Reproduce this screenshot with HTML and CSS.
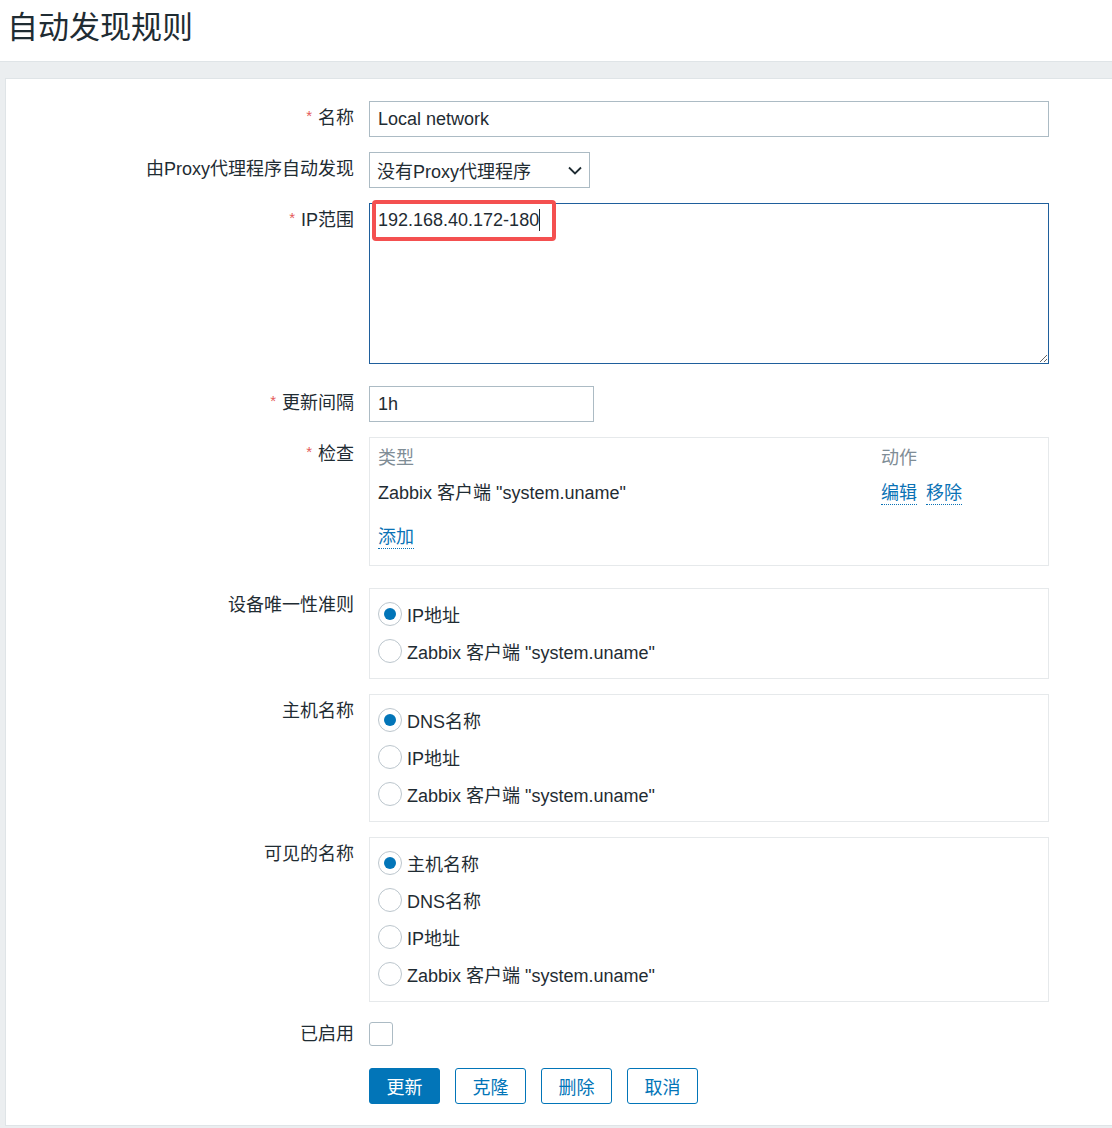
FILE: index.html
```html
<!DOCTYPE html>
<html lang="zh-CN">
<head>
    <meta charset="UTF-8">
    <meta name="viewport" content="width=device-width, initial-scale=1.0">
    <title>自动发现规则</title>
    <link rel="stylesheet" href="styles.css">
</head>
<body>

<header class="page-header">
    <h1>自动发现规则</h1>
</header>

<main class="page-content">
    <form class="form-card" id="drule-form">

        <div class="form-row">
            <label class="form-label required" for="name">名称</label>
            <div class="form-field">
                <input type="text" id="name" class="input input-wide" value="Local network">
            </div>
        </div>

        <div class="form-row">
            <label class="form-label">由Proxy代理程序自动发现</label>
            <div class="form-field">
                <div class="select">
                    <span>没有Proxy代理程序</span>
                    <svg width="14" height="9" viewBox="0 0 14 9"><path d="M1 1.5l6 6 6-6" fill="none" stroke="#1f2c33" stroke-width="1.8"/></svg>
                </div>
            </div>
        </div>

        <div class="form-row row-tall">
            <label class="form-label required" for="iprange">IP范围</label>
            <div class="form-field">
                <div class="textarea-wrap">
                    <textarea id="iprange" class="textarea">192.168.40.172-180</textarea>
                    <span class="caret"></span>
                    <span class="highlight"></span>
                </div>
            </div>
        </div>

        <div class="form-row">
            <label class="form-label required" for="delay">更新间隔</label>
            <div class="form-field">
                <input type="text" id="delay" class="input input-short" value="1h">
            </div>
        </div>

        <div class="form-row row-tall">
            <label class="form-label required">检查</label>
            <div class="form-field">
                <div class="box checks">
                    <div class="checks-head">类型</div>
                    <div class="checks-head">动作</div>
                    <div class="checks-cell">Zabbix 客户端 "system.uname"</div>
                    <div class="checks-cell">
                        <a class="link" href="#">编辑</a>
                        <a class="link" href="#">移除</a>
                    </div>
                    <div class="checks-add"><a class="link" href="#">添加</a></div>
                </div>
            </div>
        </div>

        <div class="form-row">
            <label class="form-label">设备唯一性准则</label>
            <div class="form-field">
                <div class="box radio-list">
                    <div class="radio-item"><span class="radio checked"></span>IP地址</div>
                    <div class="radio-item"><span class="radio"></span>Zabbix 客户端 "system.uname"</div>
                </div>
            </div>
        </div>

        <div class="form-row">
            <label class="form-label">主机名称</label>
            <div class="form-field">
                <div class="box radio-list">
                    <div class="radio-item"><span class="radio checked"></span>DNS名称</div>
                    <div class="radio-item"><span class="radio"></span>IP地址</div>
                    <div class="radio-item"><span class="radio"></span>Zabbix 客户端 "system.uname"</div>
                </div>
            </div>
        </div>

        <div class="form-row row-visible">
            <label class="form-label">可见的名称</label>
            <div class="form-field">
                <div class="box radio-list">
                    <div class="radio-item"><span class="radio checked"></span>主机名称</div>
                    <div class="radio-item"><span class="radio"></span>DNS名称</div>
                    <div class="radio-item"><span class="radio"></span>IP地址</div>
                    <div class="radio-item"><span class="radio"></span>Zabbix 客户端 "system.uname"</div>
                </div>
            </div>
        </div>

        <div class="form-row row-check">
            <label class="form-label">已启用</label>
            <div class="form-field">
                <span class="checkbox"></span>
            </div>
        </div>

        <div class="form-row row-buttons">
            <div></div>
            <div class="form-field buttons">
                <button type="button" class="btn btn-primary">更新</button>
                <button type="button" class="btn">克隆</button>
                <button type="button" class="btn">删除</button>
                <button type="button" class="btn">取消</button>
            </div>
        </div>

    </form>
</main>

</body>
</html>
```

FILE: styles.css
```css
html, body {
    margin: 0;
    padding: 0;
}
body {
    font-family: "Liberation Sans", Arial, "Noto Sans CJK SC", sans-serif;
    font-size: 18px;
    color: #1f2c33;
    background-color: #ebeef0;
    overflow: hidden;
}
.page-header {
    background: #fff;
    height: 62px;
    border-bottom: 1px solid #dfe4e7;
    box-sizing: border-box;
}
.page-header h1 {
    margin: 0;
    padding: 9px 0 0 7px;
    font-size: 31px;
    font-weight: normal;
    line-height: 38px;
}
.page-content {
    padding: 16px 0 0 5px;
}
.form-card {
    background: #fff;
    border: 1px solid #dfe4e7;
    border-right: none;
    padding: 22px 0 21px 0;
}
.form-row {
    display: grid;
    grid-template-columns: 348px 680px;
    column-gap: 15px;
    margin-bottom: 15px;
}
.form-row.row-tall {
    margin-bottom: 22px;
}
.form-row.row-visible {
    margin-bottom: 20px;
}
.form-row.row-check {
    margin-bottom: 22px;
}
.form-row.row-buttons {
    margin-bottom: 0;
}
.form-label {
    text-align: right;
    line-height: 35px;
    white-space: nowrap;
}
.row-check .form-label {
    line-height: 24px;
}
.form-label.required::before {
    content: "*";
    color: #e45959;
    font-size: 15px;
    margin-right: 6px;
    position: relative;
    top: -3px;
}
.input {
    display: block;
    height: 36px;
    box-sizing: border-box;
    border: 1px solid #acbbc4;
    padding: 0 8px;
    font: inherit;
    color: inherit;
    outline: none;
}
.input-wide {
    width: 680px;
}
.input-short {
    width: 225px;
}
.select {
    width: 221px;
    height: 36px;
    box-sizing: border-box;
    border: 1px solid #acbbc4;
    padding: 0 7px 0 7px;
    display: flex;
    align-items: center;
    justify-content: space-between;
}
.textarea-wrap {
    position: relative;
    width: 680px;
    height: 161px;
}
.textarea {
    display: block;
    width: 680px;
    height: 161px;
    box-sizing: border-box;
    border: 1px solid #1f5f9c;
    padding: 5px 8px;
    font: inherit;
    line-height: 22px;
    color: inherit;
    resize: vertical;
    outline: none;
}
/* text cursor after the last typed digit */
.caret {
    position: absolute;
    left: 170px;
    top: 6px;
    width: 1px;
    height: 22px;
    background: #1f2c33;
}
.highlight {
    position: absolute;
    left: 3px;
    top: -3px;
    width: 184px;
    height: 41px;
    box-sizing: border-box;
    border: 4px solid #f45050;
    border-radius: 4px;
}
.box {
    border: 1px solid #e6e9eb;
    width: 680px;
    box-sizing: border-box;
}
.checks {
    display: grid;
    grid-template-columns: 503px 1fr;
    padding: 3px 8px 10px 8px;
}
.checks-head {
    color: #7f8d96;
    line-height: 35px;
}
.checks-cell {
    line-height: 35px;
    white-space: nowrap;
}
.checks-cell .link + .link {
    margin-left: 4px;
}
.checks-add {
    grid-column: 1 / 3;
    margin-top: 9px;
    line-height: 35px;
}
.link {
    color: #0a72b5;
    text-decoration: none;
    border-bottom: 1px dotted #0a72b5;
    padding-bottom: 1px;
}
.radio-list {
    padding: 6px 8px 9px 8px;
}
.radio-item {
    display: flex;
    align-items: center;
    height: 37px;
}
.radio {
    width: 24px;
    height: 24px;
    box-sizing: border-box;
    border: 1px solid #bcc6cd;
    border-radius: 50%;
    margin-right: 5px;
    display: flex;
    align-items: center;
    justify-content: center;
}
.radio.checked::after {
    content: "";
    width: 12px;
    height: 12px;
    border-radius: 50%;
    background: #0275b8;
}
.checkbox {
    display: block;
    width: 24px;
    height: 24px;
    box-sizing: border-box;
    border: 1px solid #acbbc4;
    border-radius: 3px;
}
.buttons {
    display: flex;
    gap: 15px;
}
.btn {
    height: 36px;
    width: 71px;
    box-sizing: border-box;
    border: 1px solid #0275b8;
    border-radius: 3px;
    background: #fff;
    color: #0275b8;
    font: inherit;
    padding: 0;
    cursor: pointer;
}
.btn-primary {
    background: #0275b8;
    color: #fff;
}
```
